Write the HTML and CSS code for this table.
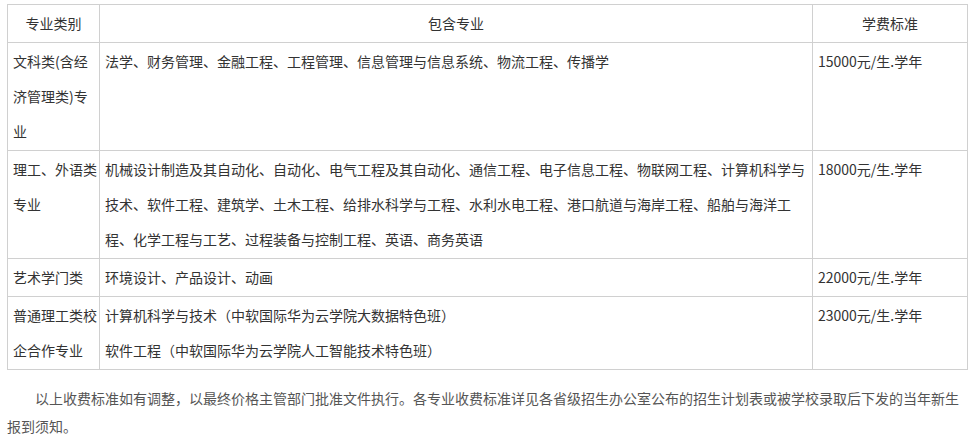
FILE: index.html
```html
<!DOCTYPE html>
<html lang="zh-CN">
<head>
<meta charset="utf-8">
<title>学费标准</title>
<link rel="stylesheet" href="styles.css">
</head>
<body>
<div class="page">
  <table class="fees">
    <colgroup>
      <col class="c-type">
      <col class="c-major">
      <col class="c-fee">
    </colgroup>
    <thead>
      <tr>
        <th>专业类别</th>
        <th>包含专业</th>
        <th>学费标准</th>
      </tr>
    </thead>
    <tbody>
      <tr>
        <td class="type">文科类(含经济管理类)专业</td>
        <td>法学、财务管理、金融工程、工程管理、信息管理与信息系统、物流工程、传播学</td>
        <td>15000元/生.学年</td>
      </tr>
      <tr>
        <td class="type">理工、外语类专业</td>
        <td>机械设计制造及其自动化、自动化、电气工程及其自动化、通信工程、电子信息工程、物联网工程、计算机科学与技术、软件工程、建筑学、土木工程、给排水科学与工程、水利水电工程、港口航道与海岸工程、船舶与海洋工程、化学工程与工艺、过程装备与控制工程、英语、商务英语</td>
        <td>18000元/生.学年</td>
      </tr>
      <tr>
        <td class="type">艺术学门类</td>
        <td>环境设计、产品设计、动画</td>
        <td>22000元/生.学年</td>
      </tr>
      <tr>
        <td class="type">普通理工类校企合作专业</td>
        <td>计算机科学与技术（中软国际华为云学院大数据特色班）<br>软件工程（中软国际华为云学院人工智能技术特色班）</td>
        <td>23000元/生.学年</td>
      </tr>
    </tbody>
  </table>
  <p class="note">以上收费标准如有调整，以最终价格主管部门批准文件执行。各专业收费标准详见各省级招生办公室公布的招生计划表或被学校录取后下发的当年新生报到须知。</p>
</div>
</body>
</html>
```

FILE: styles.css
```css
html, body {
  margin: 0;
  padding: 0;
  background: #ffffff;
}

body {
  font-family: "Noto Sans CJK SC", "Noto Sans", sans-serif;
  font-size: 14px;
  color: #333333;
}

.page {
  padding: 4px 0 0 7px;
  width: 960px;
}

.fees {
  border-collapse: collapse;
  table-layout: fixed;
  width: 960px;
}

.c-type { width: 92px; }
.c-major { width: 713px; }
.c-fee { width: 155px; }

.fees th,
.fees td {
  border: 1px solid #d0d0d0;
  padding: 1px 5px;
  line-height: 35px;
  vertical-align: top;
  text-align: left;
  font-weight: normal;
}

.fees th {
  text-align: center;
  vertical-align: middle;
}

.fees td.type {
  padding-right: 0;
}

.note {
  margin: 14px 0 0 0;
  line-height: 28px;
  text-indent: 28px;
  color: #555555;
}
```
